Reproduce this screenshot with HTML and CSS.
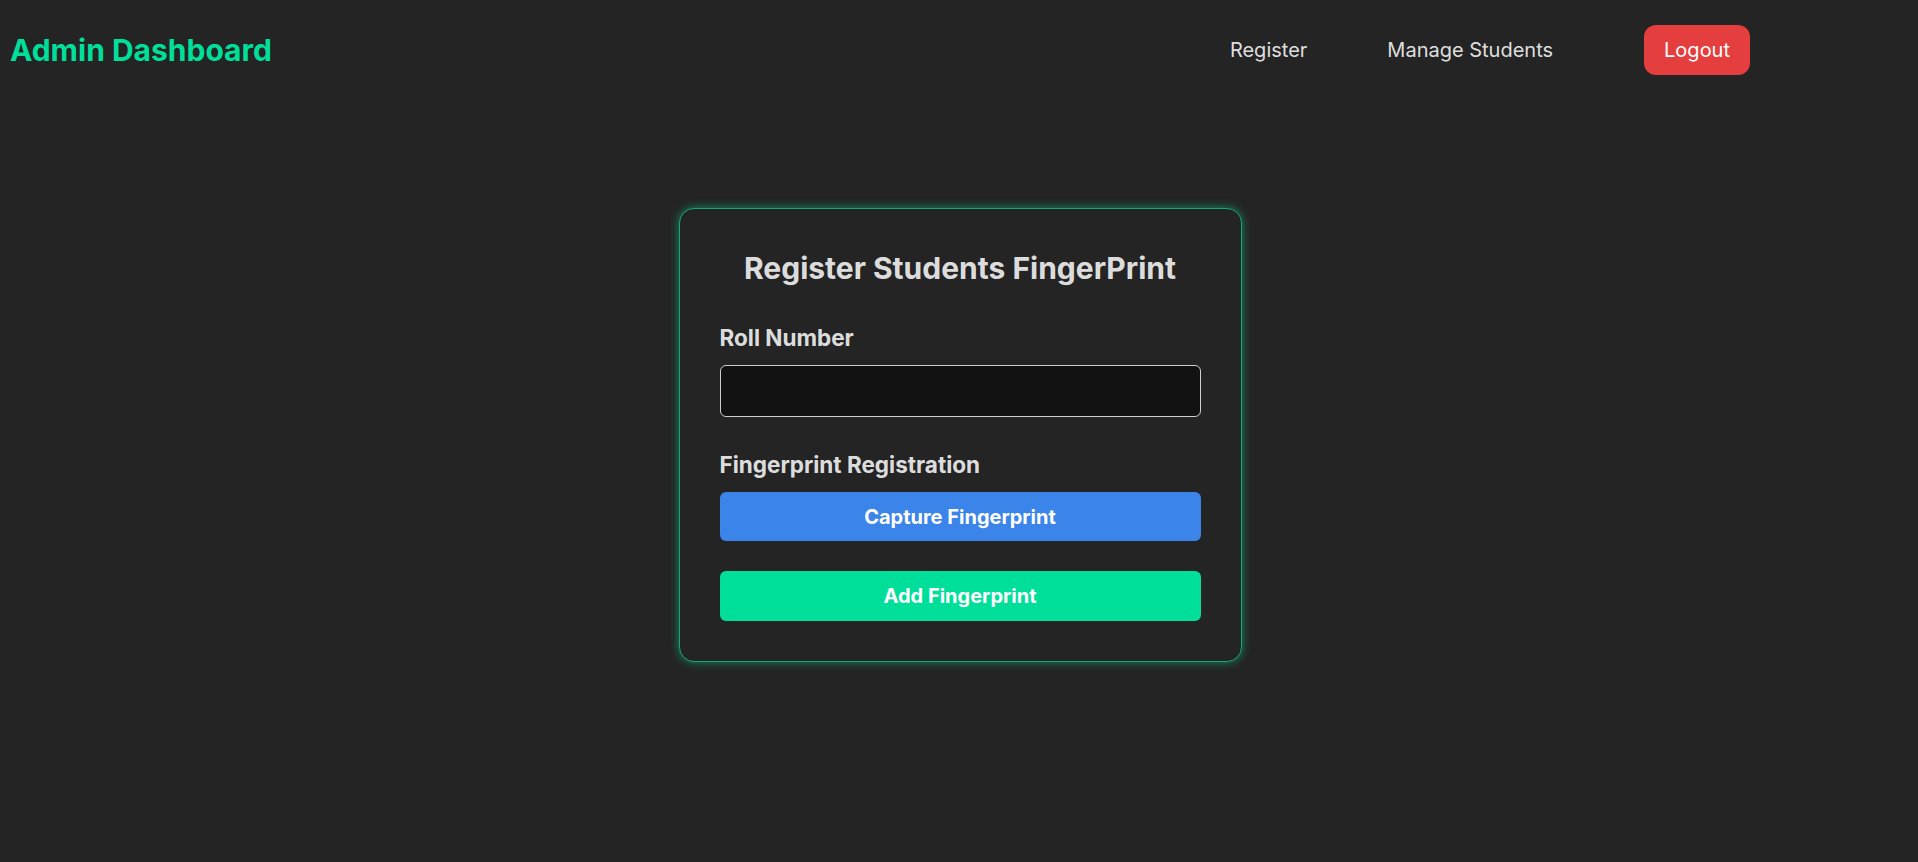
FILE: index.html
```html
<!DOCTYPE html>
<html lang="en">
<head>
<meta charset="UTF-8">
<title>Admin Dashboard</title>
<link rel="stylesheet" href="styles.css">
</head>
<body>
  <nav class="navbar">
    <div class="brand">Admin Dashboard</div>
    <ul class="nav-links">
      <li><a class="nav-link" href="#">Register</a></li>
      <li><a class="nav-link" href="#">Manage Students</a></li>
      <li><button class="logout-btn" type="button">Logout</button></li>
    </ul>
  </nav>
  <main class="main">
    <section class="card">
      <h2 class="card-title">Register Students FingerPrint</h2>
      <div class="field field-roll">
        <label class="field-label" for="roll">Roll Number</label>
        <input class="field-input" id="roll" type="text">
      </div>
      <div class="field">
        <span class="field-label">Fingerprint Registration</span>
        <button class="btn btn-blue" type="button">Capture Fingerprint</button>
      </div>
      <button class="btn btn-green" type="button">Add Fingerprint</button>
    </section>
  </main>
</body>
</html>
```

FILE: styles.css
```css
* { box-sizing: border-box; }

html, body {
  margin: 0;
  padding: 0;
}

body {
  background: #242424;
  color: rgba(255, 255, 255, 0.87);
  font-family: Inter, "Noto Sans", sans-serif;
  min-height: 100vh;
}

.navbar {
  height: 100px;
  display: flex;
  align-items: center;
  justify-content: space-between;
  padding: 0 168px 0 10px;
}

.brand {
  font-size: 30px;
  font-weight: 700;
  color: #00df9a;
}

.nav-links {
  list-style: none;
  display: flex;
  align-items: center;
  gap: 80px;
  margin: 0;
  padding: 0;
}

.nav-link {
  font-family: Inter, sans-serif;
  font-size: 20px;
  color: rgba(255, 255, 255, 0.87);
  text-decoration: none;
}

.logout-btn {
  margin-left: 11px;
  height: 50px;
  padding: 0 20px;
  border: none;
  border-radius: 12px;
  background: #e53e3e;
  color: #fff;
  font-family: Inter, sans-serif;
  font-size: 20px;
}

.main {
  display: flex;
  justify-content: center;
  padding: 108px 0 0 2px;
}

.card {
  width: 563px;
  padding: 41px 40px 40px;
  border: 1px solid #17a776;
  border-radius: 15px;
  background: #242424;
  box-shadow: 0 0 10px rgba(0, 223, 154, 0.55);
}

.card-title {
  margin: 0 0 38px;
  text-align: center;
  font-size: 30px;
  font-weight: 700;
  line-height: 1.2;
}

.field {
  display: flex;
  flex-direction: column;
  margin-bottom: 30px;
}

.field-roll {
  margin-bottom: 34px;
}

.field-label {
  font-size: 22.5px;
  font-weight: 700;
  line-height: 1.2;
  margin-bottom: 14px;
}

.field-input {
  height: 52px;
  border: 1px solid #cfcfcf;
  border-radius: 6px;
  background: #121212;
  color: #fff;
  font-size: 18px;
  padding: 0 12px;
}

.btn {
  width: 100%;
  height: 50px;
  border: none;
  border-radius: 6px;
  color: #fff;
  font-family: Inter, sans-serif;
  font-size: 20px;
  font-weight: 700;
}

.btn-blue { background: #3b84ea; height: 49px; }
.btn-green { background: #00df9a; }
```
